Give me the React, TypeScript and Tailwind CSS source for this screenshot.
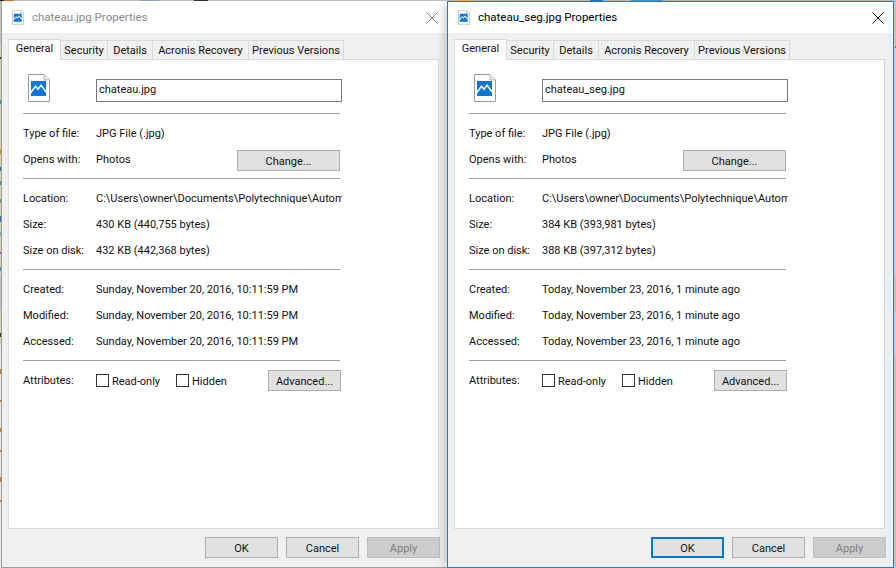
const font = "font-['Roboto','Noto_Sans',sans-serif]";

function FileIcon({ small = false }: { small?: boolean }) {
  return (
    <svg width={small ? 12 : 22} height={small ? 15 : 28} viewBox="0 0 22 28">
      <path d="M.5.5H16L21.5 6V27.5H.5Z" fill="#fff" stroke="#9a9a9a" />
      <path d="M16 .5V6H21.5" fill="#e8e8e8" stroke="#b5b5b5" />
      <rect x="3" y="7" width="15" height="15" fill="#0a78d4" />
      <path d="M3 17L7.5 11L10 14L13 10L18 16.5V22H3Z" fill="#fff" />
      <path d="M3 22V19.5L7.5 13.5L10 16.5L13 12.5L18 19V22Z" fill="#0a78d4" />
    </svg>
  );
}

function Btn({ label, width = "w-[73px]", height = "h-[21px]", variant = "normal", className = "" }: { label: string; width?: string; height?: string; variant?: "normal" | "disabled" | "focus"; className?: string }) {
  const look =
    variant === "disabled"
      ? "bg-[#cccccc] border border-[#bfbfbf] text-[#7f7f7f]"
      : variant === "focus"
        ? "bg-[#e1e1e1] border-2 border-[#0078d7] text-[#111]"
        : "bg-[#e1e1e1] border border-[#adadad] text-[#111]";
  return <div className={`${width} ${height} ${look} ${className} flex items-center justify-center shrink-0 pt-[3px]`}>{label}</div>;
}

function Row({ label, value }: { label: string; value: string }) {
  return (
    <div className="flex items-center h-[26px] pt-[2px]">
      <div className="w-[73px] shrink-0">{label}</div>
      <div className="w-[246px] overflow-hidden whitespace-nowrap">{value}</div>
    </div>
  );
}

function Sep() {
  return <div className="h-px bg-[#a0a0a0] w-[317px]" />;
}

function Check({ label, className = "" }: { label: string; className?: string }) {
  return (
    <div className={`flex items-center gap-[3px] ${className}`}>
      <div className="w-[13px] h-[13px] border border-[#333] bg-white" />
      <span className="pt-[3px]">{label}</span>
    </div>
  );
}

type D = { title: string; name: string; size: string; disk: string; created: string; active: boolean };

function Dialog({ d }: { d: D }) {
  return (
    <div className={`h-[567px] shrink-0 flex flex-col bg-[#f0f0f0] ${d.active ? "w-[447px] border border-[#2a7ab8] shadow-[-7px_0_7px_-3px_rgba(0,0,0,0.16)] z-10" : "w-[446px] border border-r-0 border-t-0 border-[#9c9c9c]"}`}>
      <div className={`bg-white flex items-center pl-[10px] shrink-0 pr-[9px] ${d.active ? "h-[31px]" : "h-[32px] pt-px"}`}>
        <FileIcon small />
        <span className={`ml-[8px] pb-[2px] text-[11.5px] ${d.active ? "text-black" : "text-[#8a8a8a]"}`}>{d.title}</span>
        <svg className="ml-auto" width="12" height="12" viewBox="0 0 12 12">
          <path d="M.5.5L11.5 11.5M11.5.5L.5 11.5" stroke={d.active ? "#111" : "#8a8a8a"} fill="none" />
        </svg>
      </div>
      <div className="flex items-end h-[27px] pl-[6px] shrink-0 relative z-10 text-[#111]">
        <div className="h-[21px] w-[53px] bg-white border border-b-0 border-[#d9d9d9] flex items-center justify-center pb-[2px]">General</div>
        {[
          ["Security", "w-[47px]"],
          ["Details", "w-[45px]"],
          ["Acronis Recovery", "w-[96px]"],
          ["Previous Versions", "w-[95px]"],
        ].map(([t, w]) => (
          <div key={t} className={`h-[19px] ${w} mb-px pt-px border border-l-0 border-b-0 border-[#d9d9d9] flex items-center justify-center whitespace-nowrap`}>{t}</div>
        ))}
      </div>
      <div className="w-[431px] h-[470px] ml-[6px] -mt-px bg-white border border-[#d9d9d9] pl-[14px] shrink-0 text-[#111]">
        <div className="flex items-start h-[53px]">
          <div className="w-[5px] shrink-0" />
          <div className="mt-[14px] w-[68px] shrink-0"><FileIcon /></div>
          <div className="mt-[19px] w-[246px] h-[23px] border border-[#7a7a7a] flex items-center pl-[2px] pb-[2px]">{d.name}</div>
        </div>
        <Sep />
        <div className="h-[6px]" />
        <Row label="Type of file:" value="JPG File (.jpg)" />
        <div className="flex items-center h-[26px] pt-[2px]">
          <div className="w-[73px] shrink-0">Opens with:</div>
          <div className="w-[141px]">Photos</div>
          <Btn label="Change..." width="w-[103px]" className="mt-[1px]" />
        </div>
        <div className="h-[6px]" />
        <Sep />
        <div className="h-[6px]" />
        <Row label="Location:" value="C:\Users\owner\Documents\Polytechnique\Automne" />
        <Row label="Size:" value={d.size} />
        <Row label="Size on disk:" value={d.disk} />
        <div className="h-[6px]" />
        <Sep />
        <div className="h-[6px]" />
        <Row label="Created:" value={d.created} />
        <Row label="Modified:" value={d.created} />
        <Row label="Accessed:" value={d.created} />
        <div className="h-[6px]" />
        <Sep />
        <div className="flex items-center h-[38px]">
          <div className="w-[73px] shrink-0 pt-[2px]">Attributes:</div>
          <Check label="Read-only" className="w-[80px]" />
          <Check label="Hidden" className="w-[92px]" />
          <Btn label="Advanced..." className="mt-px" />
        </div>
      </div>
      <div className="flex gap-[8px] mt-[8px] pl-[203px] text-[#111]">
        <Btn label="OK" variant={d.active ? "focus" : "normal"} />
        <Btn label="Cancel" />
        <Btn label="Apply" variant="disabled" />
      </div>
    </div>
  );
}

const left: D = { title: "chateau.jpg Properties", name: "chateau.jpg", size: "430 KB (440,755 bytes)", disk: "432 KB (442,368 bytes)", created: "Sunday, November 20, 2016, 10:11:59 PM", active: false };
const right: D = { title: "chateau_seg.jpg Properties", name: "chateau_seg.jpg", size: "384 KB (393,981 bytes)", disk: "388 KB (397,312 bytes)", created: "Today, November 23, 2016, 1 minute ago", active: true };

export default function App() {
  return (
    <div className={`${font} relative w-[896px] h-[568px] overflow-hidden bg-[#c8c8c8] text-[11px] leading-[16px] flex pl-px pt-px`}>
      <div className="absolute left-0 top-0 w-px h-full bg-[linear-gradient(to_bottom,#c0c0c0_0,#c0c0c0_45px,#d6d3ad_45px,#d6d3ad_57px,#333_57px,#333_59px,#d6d3ad_59px,#d6d3ad_100px,#2a9d8f_100px,#2a9d8f_104px,#d6d3ad_104px,#d6d3ad_149px,#c29a2a_149px,#c29a2a_154px,#d6d3ad_154px,#d6d3ad_167px,#2a6fb0_167px,#2a6fb0_171px,#d6d3ad_171px,#d6d3ad_181px,#2a9d8f_181px,#2a9d8f_185px,#d6d3ad_185px,#d6d3ad_199px,#5a9d6f_199px,#5a9d6f_203px,#d6d3ad_203px,#d6d3ad_216px,#2a6fb0_216px,#2a6fb0_222px,#d6d3ad_222px,#d6d3ad_232px,#7ab0b0_232px,#7ab0b0_236px,#d6d3ad_236px,#d6d3ad_252px,#8a3fc0_252px,#8a3fc0_254px,#d6d3ad_254px,#d6d3ad_267px,#4a90c0_267px,#4a90c0_271px,#d6d3ad_271px,#d6d3ad_275px,#c0c0c0_275px,#c0c0c0_310px,#d6d3ad_310px,#d6d3ad_333px,#333_333px,#333_337px,#d6d3ad_337px,#d6d3ad_345px,#e8e8e8_345px,#e8e8e8_369px,#c8762a_369px,#c8762a_374px,#e8e8e8_374px,#e8e8e8_400px,#c8762a_400px,#c8762a_402px,#e8e8e8_402px,#e8e8e8_428px,#c8762a_428px,#c8762a_432px,#e8e8e8_432px,#e8e8e8_450px,#c8762a_450px,#c8762a_452px,#e8e8e8_452px,#e8e8e8_477px,#c8762a_477px,#c8762a_482px,#e8e8e8_482px,#e8e8e8_500px,#c8762a_500px,#c8762a_502px,#e8e8e8_502px)]" />
      <div className="absolute right-0 top-0 w-px h-full bg-[linear-gradient(to_bottom,#c0c0c0_0,#c0c0c0_46px,#777_46px,#777_48px,#d6d3ad_48px,#d6d3ad_274px,#c0c0c0_274px,#c0c0c0_312px,#d6d3ad_312px,#d6d3ad_354px,#c0c0c0_354px)]" />
      <div className="absolute left-0 top-0 w-full h-px bg-[linear-gradient(to_right,#222_0,#222_4px,#c8762a_4px,#c8762a_14px,#bdbdbd_14px,#bdbdbd_140px,#8fa0c0_140px,#8fa0c0_159px,#bdbdbd_159px,#bdbdbd_194px,#333_194px,#333_208px,#bdbdbd_208px,#bdbdbd_457px,#d8c070_457px,#d8c070_471px,#bdbdbd_471px,#bdbdbd_590px,#1a78c8_590px,#1a78c8_603px,#bdbdbd_603px,#bdbdbd_631px,#4a98d8_631px,#4a98d8_663px,#bdbdbd_663px)]" />
      <Dialog d={left} />
      <Dialog d={right} />
    </div>
  );
}
